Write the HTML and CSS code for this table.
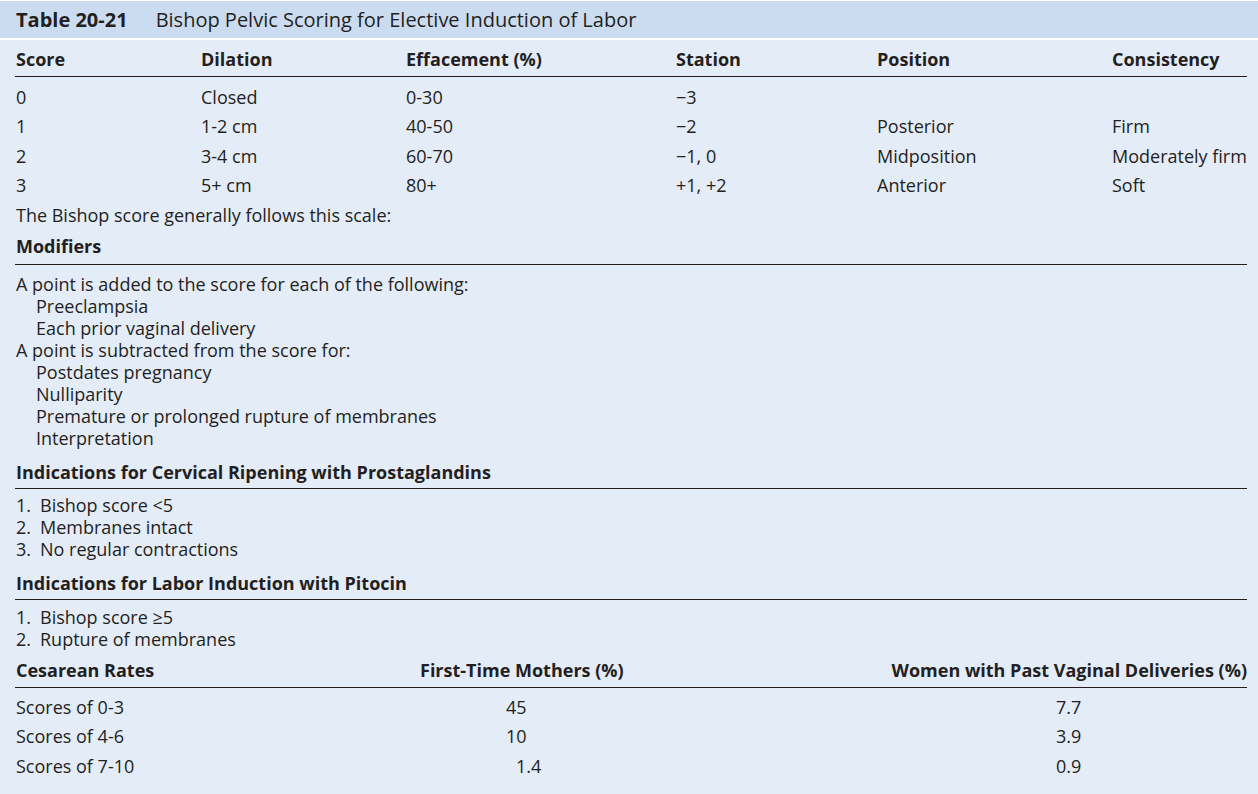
FILE: index.html
```html
<!DOCTYPE html>
<html lang="en">
<head>
<meta charset="utf-8">
<title>Bishop Pelvic Scoring</title>
<link rel="stylesheet" href="styles.css">
</head>
<body>
<div class="page">
  <div class="title">
    <span class="title-num">Table 20-21</span>
    <span class="title-text">Bishop Pelvic Scoring for Elective Induction of Labor</span>
  </div>
  <div class="content">
    <div class="grid head">
      <div>Score</div><div>Dilation</div><div>Effacement (%)</div><div>Station</div><div>Position</div><div>Consistency</div>
    </div>
    <div class="grid rows">
      <div>0</div><div>Closed</div><div>0-30</div><div>−3</div><div></div><div></div>
      <div>1</div><div>1-2 cm</div><div>40-50</div><div>−2</div><div>Posterior</div><div>Firm</div>
      <div>2</div><div>3-4 cm</div><div>60-70</div><div>−1, 0</div><div>Midposition</div><div>Moderately firm</div>
      <div>3</div><div>5+ cm</div><div>80+</div><div>+1, +2</div><div>Anterior</div><div>Soft</div>
    </div>
    <div class="note">The Bishop score generally follows this scale:</div>
    <div class="section-head first">Modifiers</div>
    <div class="list mod">
      <div>A point is added to the score for each of the following:</div>
      <div class="ind">Preeclampsia</div>
      <div class="ind">Each prior vaginal delivery</div>
      <div>A point is subtracted from the score for:</div>
      <div class="ind">Postdates pregnancy</div>
      <div class="ind">Nulliparity</div>
      <div class="ind">Premature or prolonged rupture of membranes</div>
      <div class="ind">Interpretation</div>
    </div>
    <div class="section-head">Indications for Cervical Ripening with Prostaglandins</div>
    <div class="list">
      <div class="num"><span class="n">1.</span>Bishop score &lt;5</div>
      <div class="num"><span class="n">2.</span>Membranes intact</div>
      <div class="num"><span class="n">3.</span>No regular contractions</div>
    </div>
    <div class="section-head">Indications for Labor Induction with Pitocin</div>
    <div class="list">
      <div class="num"><span class="n">1.</span>Bishop score ≥5</div>
      <div class="num"><span class="n">2.</span>Rupture of membranes</div>
    </div>
    <div class="ces head-row">
      <div class="c1">Cesarean Rates</div>
      <div class="c2">First-Time Mothers (%)</div>
      <div class="c3">Women with Past Vaginal Deliveries (%)</div>
    </div>
    <div class="ces-rows">
      <div class="ces">
        <div class="c1">Scores of 0-3</div><div class="c2 v"><span class="int">45</span></div><div class="c3 v"><span class="dec">7.7</span></div>
      </div>
      <div class="ces">
        <div class="c1">Scores of 4-6</div><div class="c2 v"><span class="int">10</span></div><div class="c3 v"><span class="dec">3.9</span></div>
      </div>
      <div class="ces">
        <div class="c1">Scores of 7-10</div><div class="c2 v"><span class="int shift">1.4</span></div><div class="c3 v"><span class="dec">0.9</span></div>
      </div>
    </div>
  </div>
</div>
</body>
</html>
```
FILE: styles.css
```css
html, body {
  margin: 0;
  padding: 0;
  background: #ffffff;
}
body {
  font-family: "Open Sans", Lato, sans-serif;
  font-size: 18px;
  color: #231f20;
}
.page {
  width: 1258px;
  height: 794px;
  padding-top: 1px;
  box-sizing: border-box;
  display: flex;
  flex-direction: column;
}
.title {
  height: 37px;
  background: #cbdcf1;
  display: flex;
  align-items: center;
  padding-left: 16px;
  font-size: 20px;
  gap: 28px;
}
.title-num { font-weight: 700; }
.content {
  flex: 1;
  margin-top: 2px;
  background: #e4ecf8;
  padding: 0 11px 0 15px;
  line-height: 22px;
}
.grid {
  display: grid;
  grid-template-columns: 185px 205px 270px 201px 235px 1fr;
}
.grid > div { padding-left: 1px; white-space: nowrap; }
.head {
  font-weight: 700;
  padding: 8px 0 6px;
  border-bottom: 1.5px solid #231f20;
}
.rows {
  margin-top: 5.5px;
  line-height: 29.5px;
}
.note {
  line-height: 29.5px;
  padding-left: 1px;
}
.section-head {
  font-weight: 700;
  padding: 12px 0 5px 1px;
  border-bottom: 1.5px solid #231f20;
}
.section-head.first {
  padding-top: 5px;
  padding-bottom: 7px;
}
.list {
  padding-top: 5.5px;
  padding-left: 1px;
}
.list.mod { padding-top: 7.5px; }
.ind { padding-left: 20px; }
.num { display: flex; }
.num .n { width: 24px; }
.ces {
  display: flex;
}
.head-row {
  font-weight: 700;
  padding: 9.5px 0 6px;
  border-bottom: 1.5px solid #231f20;
}
.c1 { width: 405px; padding-left: 1px; box-sizing: border-box; }
.c2 { width: 300px; }
.c3 { flex: 1; text-align: right; white-space: nowrap; }
.ces-rows { padding-top: 4.5px; }
.ces-rows .ces { line-height: 29.5px; }
.c2.v { padding-left: 86px; box-sizing: border-box; }
.c3.v { text-align: left; padding-left: 336px; }
.shift { padding-left: 10px; }
```
